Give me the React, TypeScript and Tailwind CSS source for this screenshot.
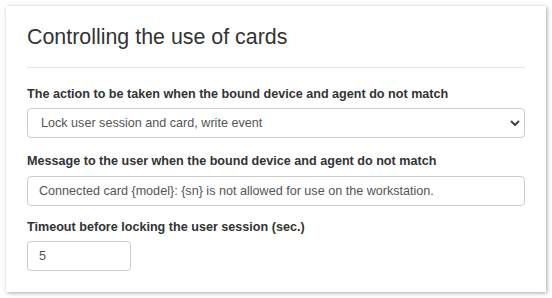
export default function App() {
  return (
    <div className="h-[298px] w-[552px] bg-white pl-[6px] pt-[6px] font-[family-name:'Liberation_Sans',Arial,sans-serif]">
      <div className="h-[286px] w-[540px] bg-white px-[21px] pt-[18px] shadow-[1px_1px_4px_rgba(0,0,0,0.35)]">
        <h1 className="text-[21.4px] leading-[26px] text-[#333]">Controlling the use of cards</h1>
        <div className="mt-[17px] border-t border-[#e5e5e5]" />

        <label className="mt-[18px] block text-[12.6px] font-bold leading-[16px] text-[#333]">
          The action to be taken when the bound device and agent do not match
        </label>
        <div className="relative mt-[6px] flex h-[30px] items-center rounded-[4px] border border-[#ccc] pl-[13px] text-[12.6px] text-[#555]">
          Lock user session and card, write event
          <svg className="absolute right-[4px] top-[11px] h-[7px] w-[10px]" viewBox="0 0 10 7" fill="none">
            <path d="M1.5 1.5 L5 5 L8.5 1.5" stroke="#444" strokeWidth="2" strokeLinecap="round" strokeLinejoin="round" />
          </svg>
        </div>

        <label className="mt-[15px] block text-[12.6px] font-bold leading-[16px] text-[#333]">
          Message to the user when the bound device and agent do not match
        </label>
        <div className="mt-[7px] flex h-[30px] items-center rounded-[4px] border border-[#ccc] pl-[11px] text-[12.6px] text-[#555]">
          Connected card {'{model}'}: {'{sn}'} is not allowed for use on the workstation.
        </div>

        <label className="mt-[13px] block text-[12.6px] font-bold leading-[16px] text-[#333]">
          Timeout before locking the user session (sec.)
        </label>
        <div className="mt-[6px] flex h-[30px] w-[104px] items-center rounded-[4px] border border-[#ccc] pl-[11px] text-[12.6px] text-[#555]">
          5
        </div>
      </div>
    </div>
  );
}
